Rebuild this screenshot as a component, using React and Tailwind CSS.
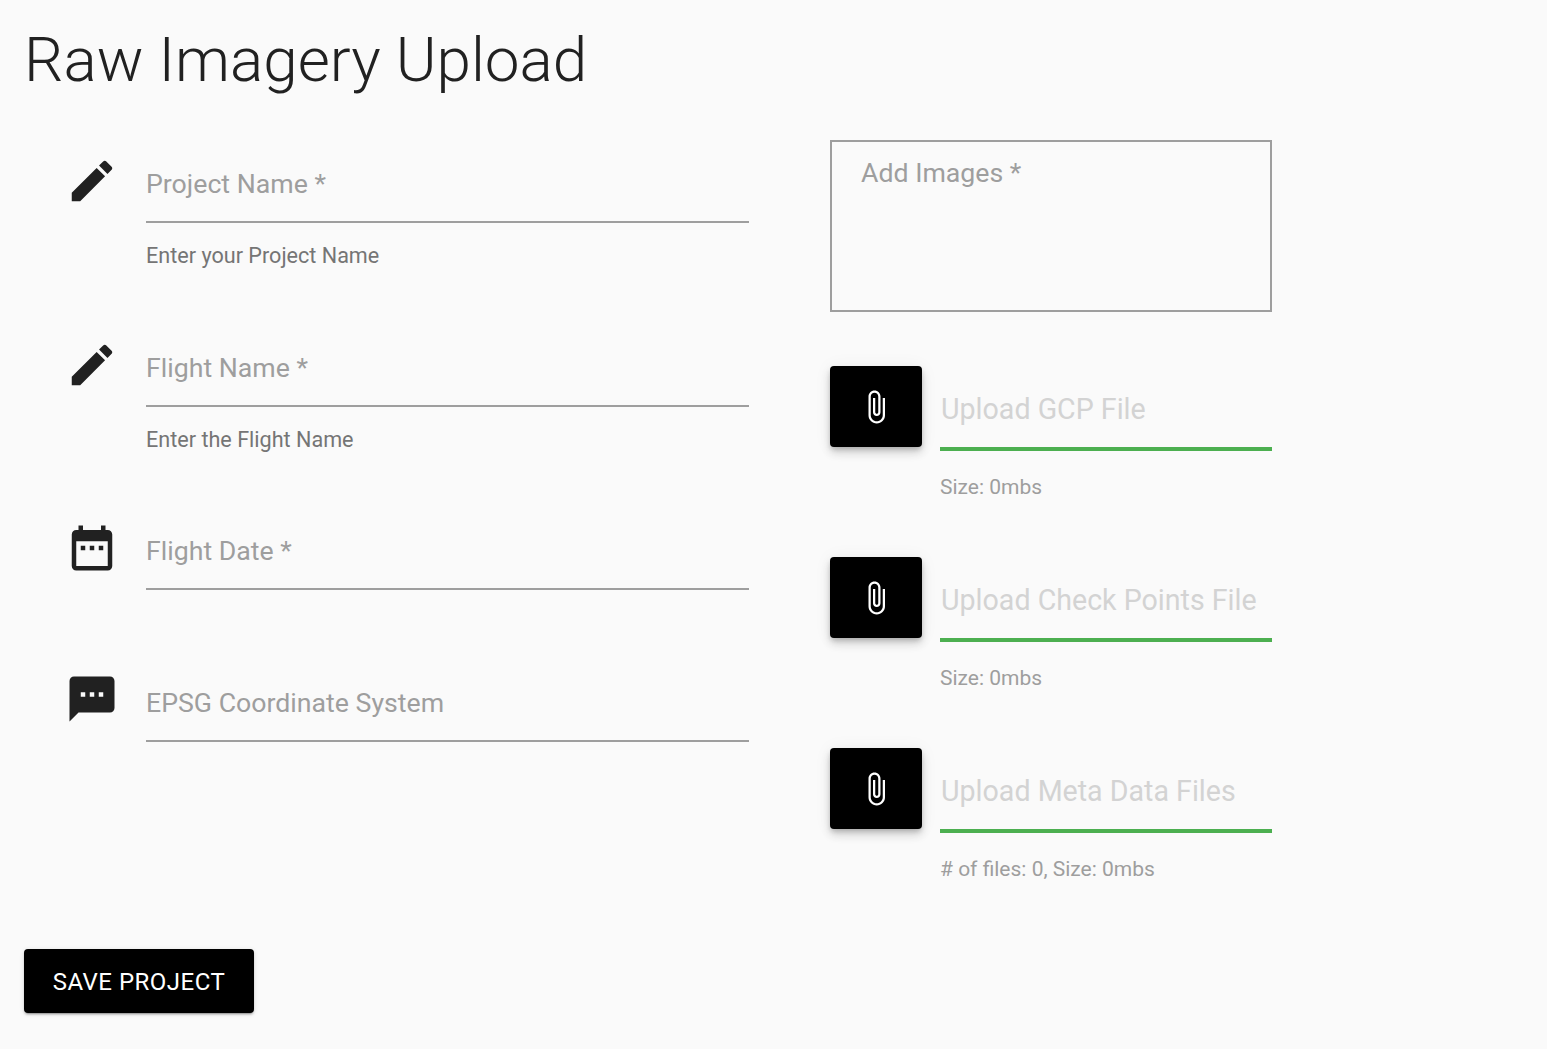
const ff = "font-['Roboto','Liberation_Sans',sans-serif]";

const paths = {
  edit: "M3 17.25V21h3.75L17.81 9.94l-3.75-3.75L3 17.25zM20.71 7.04c.39-.39.39-1.02 0-1.41l-2.34-2.34c-.39-.39-1.02-.39-1.41 0l-1.83 1.83 3.75 3.75 1.83-1.83z",
  date: "M9 11H7v2h2v-2zm4 0h-2v2h2v-2zm4 0h-2v2h2v-2zm2-7h-1V2h-2v2H8V2H6v2H5c-1.11 0-1.99.9-1.99 2L3 20c0 1.1.89 2 2 2h14c1.1 0 2-.9 2-2V6c0-1.1-.9-2-2-2zm0 16H5V9h14v11z",
  sms: "M20 2H4c-1.1 0-1.99.9-1.99 2L2 22l4-4h14c1.1 0 2-.9 2-2V4c0-1.1-.9-2-2-2zM9 11H7V9h2v2zm4 0h-2V9h2v2zm4 0h-2V9h2v2z",
  attach: "M16.5 6v11.5c0 2.21-1.79 4-4 4s-4-1.79-4-4V5c0-1.38 1.12-2.5 2.5-2.5s2.5 1.12 2.5 2.5v10.5c0 .55-.45 1-1 1s-1-.45-1-1V6H10v9.5c0 1.38 1.12 2.5 2.5 2.5s2.5-1.12 2.5-2.5V5c0-2.21-1.79-4-4-4S7 2.79 7 5v12.5c0 3.04 2.46 5.5 5.5 5.5s5.5-2.46 5.5-5.5V6h-1.5z",
};

function Icon({ d, className }) {
  return (
    <svg viewBox="0 0 24 24" className={className} fill="currentColor">
      <path d={d} />
    </svg>
  );
}

function Field({ icon, label, helper, className = "", iconTop = "pt-px" }) {
  return (
    <div className={`flex ${className}`}>
      <div className={`ml-10 flex w-14 h-14 shrink-0 justify-center text-[#212121] ${iconTop}`}>
        <Icon d={paths[icon]} className="w-[54px] h-[54px] shrink-0" />
      </div>
      <div className="ml-[26px] w-[603px]">
        <div className="h-[70px] border-b-2 border-[#9e9e9e] pt-[12px] text-[26.7px] leading-[38px] text-[#9e9e9e]">{label}</div>
        {helper && <div className="mt-[19px] text-[21.6px] leading-[28px] text-[#757575]">{helper}</div>}
      </div>
    </div>
  );
}

function Upload({ label, size, className }) {
  return (
    <div className={`flex ${className}`}>
      <button className="flex h-[81px] w-[92px] items-center justify-center rounded bg-black text-white shadow-[0_3px_5px_-1px_rgba(0,0,0,0.2),0_6px_10px_0_rgba(0,0,0,0.14),0_1px_18px_0_rgba(0,0,0,0.06)]">
        <Icon d={paths.attach} className="h-9 w-9" />
      </button>
      <div className="ml-[18px] w-[332px]">
        <div className="h-[85px] border-b-4 border-[#4caf50] pt-[22px] pl-px text-[28.6px] leading-[42px] text-[#d3d3d3]">{label}</div>
        <div className="mt-[22px] text-[21px] leading-[28px] text-[#9e9e9e]">{size}</div>
      </div>
    </div>
  );
}

export default function App() {
  return (
    <div className={`${ff} min-h-[1049px] bg-[#fafafa] px-6 pt-[25px]`}>
      <h1 className="text-[62px] font-light leading-[70px] text-[#212121]">Raw Imagery Upload</h1>
      <div className="mt-[45px] flex">
        <div className="w-[806px] pt-[13px]">
          <Field icon="edit" label="Project Name *" helper="Enter your Project Name" />
          <Field icon="edit" label="Flight Name *" helper="Enter the Flight Name" className="mt-[67px]" />
          <Field icon="date" label="Flight Date *" className="mt-[66px]" />
          <Field icon="sms" label="EPSG Coordinate System" className="mt-[82px]" iconTop="pt-0" />
        </div>
        <div className="w-[442px]">
          <div className="h-[172px] border-2 border-[#9e9e9e] px-[29px] pt-[12px] text-[26.7px] leading-[38px] text-[#9e9e9e]">Add Images *</div>
          <Upload label="Upload GCP File" size="Size: 0mbs" className="mt-[54px]" />
          <Upload label="Upload Check Points File" size="Size: 0mbs" className="mt-[56px]" />
          <Upload label="Upload Meta Data Files" size="# of files: 0, Size: 0mbs" className="mt-[56px]" />
        </div>
      </div>
      <button className="mt-[66px] h-16 w-[230px] rounded bg-black pt-px text-[24px] leading-none tracking-[0.5px] text-white shadow-[0_3px_1px_-2px_rgba(0,0,0,0.2),0_2px_2px_0_rgba(0,0,0,0.14),0_1px_5px_0_rgba(0,0,0,0.12)]">SAVE PROJECT</button>
    </div>
  );
}
